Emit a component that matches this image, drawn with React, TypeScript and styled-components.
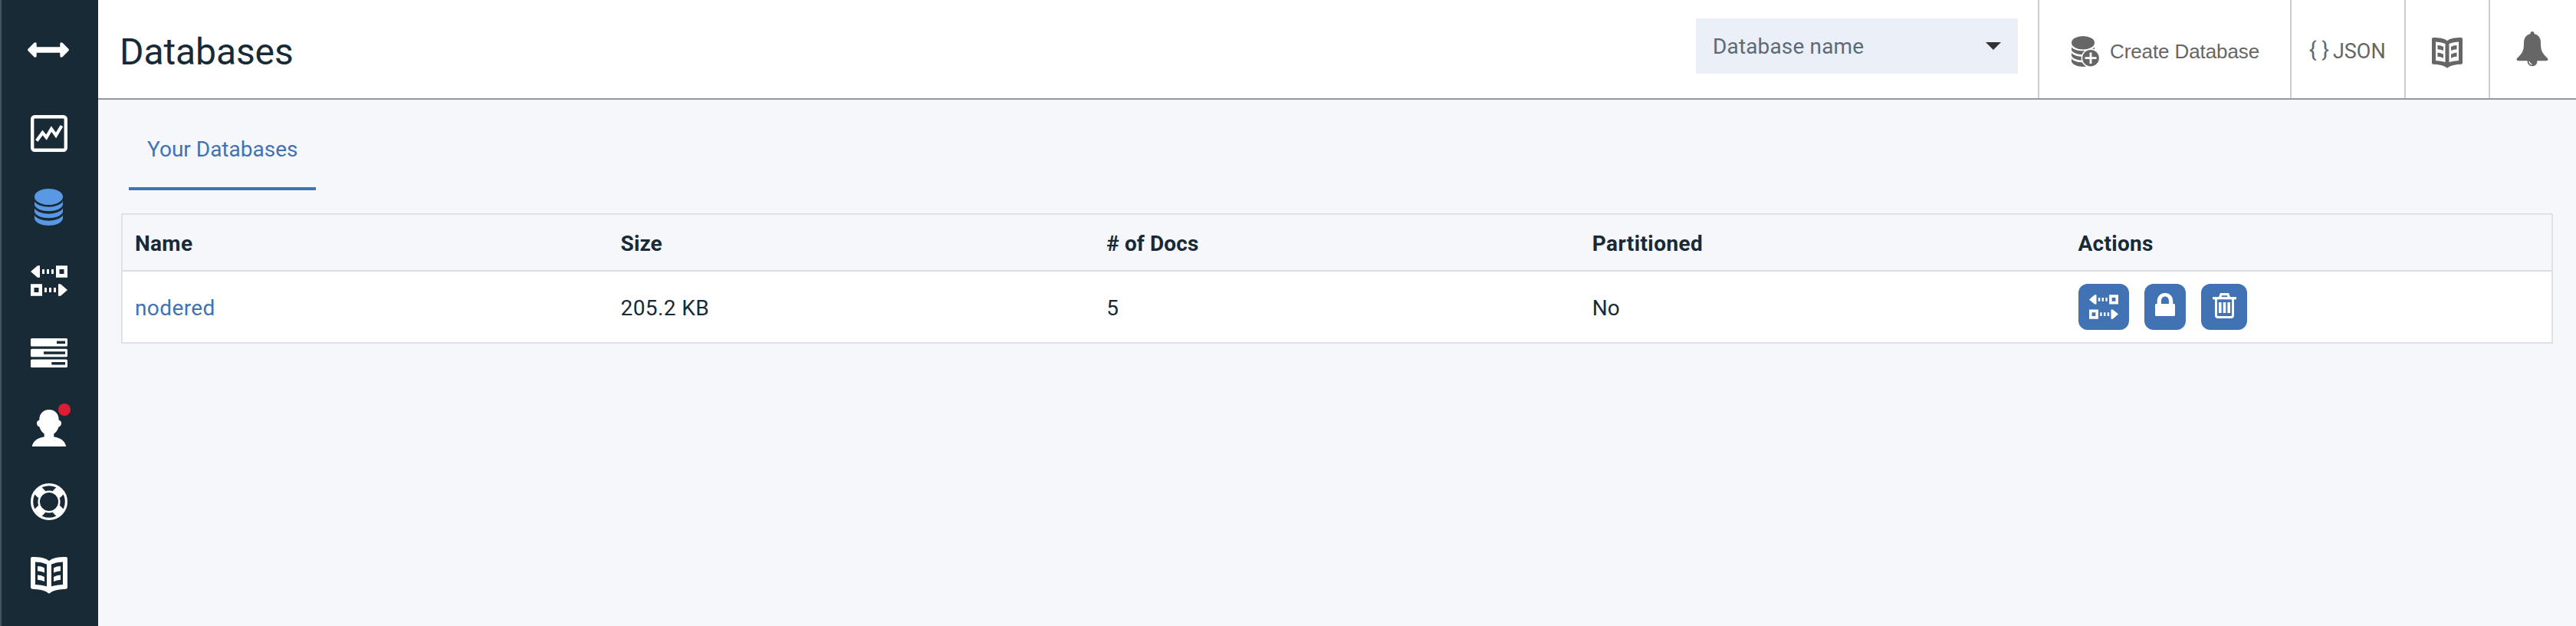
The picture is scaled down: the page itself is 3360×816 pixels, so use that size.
import React from 'react';
import styled, { createGlobalStyle } from 'styled-components';

const GlobalStyle = createGlobalStyle`
  * { box-sizing: border-box; }
  body { margin: 0; background: #f5f7fb; color: #182a35; font-family: Roboto, "Liberation Sans", sans-serif; font-size: 28px; }
  svg { display: block; flex: none; }
`;

const Page = styled.div`display: flex; height: 816px; overflow: hidden;`;

const Sidebar = styled.nav`
  display: flex; flex-direction: column; align-items: center;
  width: 128px; flex: none;
  background: #182a35; border-left: 2px solid #46545d; padding: 18px 2px 0 0;
`;

const NavItem = styled.a<{ $color?: string; $h: number; $nudge?: number }>`
  display: flex; align-items: center; justify-content: center;
  width: 100%; height: ${p => p.$h}px; flex: none; color: ${p => p.$color ?? '#fff'};
  padding-right: ${p => p.$nudge ?? 0}px;
`;

const Main = styled.main`flex: 1; min-width: 0;`;

const Header = styled.header`
  display: flex; height: 130px; background: #fff; border-bottom: 2px solid #959898;
`;

const Title = styled.h1`
  flex: 1; margin: 0; padding-left: 28px;
  font-size: 48px; font-weight: 400; line-height: 135px;
`;

const Label = styled.span<{ $ls?: number }>`letter-spacing: ${p => p.$ls ?? 0}px; white-space: nowrap;`;

const Select = styled.div`
  display: flex; align-items: center; justify-content: space-between;
  width: 420px; height: 72px; margin: 24px 26px 0 0; padding: 0 22px;
  background: #ebeff8; color: #5c6b75;
`;

const Caret = styled.i`
  border: 10px solid transparent; border-top-color: #333; border-bottom: 0;
`;

const Tool = styled.a<{ $w: number; $pad?: number; $top?: number }>`
  display: flex; align-items: center; width: ${p => p.$w}px; height: 128px;
  border-left: 2px solid #ccc; padding: ${p => p.$top ?? 0}px 0 0 ${p => p.$pad ?? 0}px; color: #666;
`;

const CreateText = styled(Label)`
  font-family: "Liberation Sans", sans-serif; font-size: 26px; margin-left: 14px; padding-top: 1px;
`;

const Braces = styled(Label)`font-size: 28px;`;
const JsonText = styled(Label)`font-size: 27px; padding-top: 5px; margin-left: 5px;`;

const Tabs = styled.div`display: flex; padding-left: 40px; height: 118px;`;
const Tab = styled.a`
  width: 244px; border-bottom: 4px solid #4172b4; color: #4172b4; padding-left: 24px; line-height: 129px;
`;

const Table = styled.section`
  margin: 30px 30px 0; border: 2px solid #dfe1e6; height: 170px;
`;

const Row = styled.div<{ $head?: boolean }>`
  display: grid; grid-template-columns: repeat(5, 1fr); align-items: center;
  height: ${p => (p.$head ? 74 : 92)}px;
  background: ${p => (p.$head ? 'transparent' : '#fff')};
  font-weight: ${p => (p.$head ? 700 : 400)};
  border-bottom: ${p => (p.$head ? '2px solid #dcdddf' : '0')};
`;

const Cell = styled.div<{ $link?: boolean }>`
  padding: 3px 0 0 16px; color: ${p => (p.$link ? '#4172b4' : 'inherit')};
`;

const Actions = styled.div`display: flex; gap: 20px; padding-left: 17px;`;

const ActionButton = styled.button<{ $w: number; $top?: number }>`
  display: flex; align-items: flex-start; justify-content: center;
  width: ${p => p.$w}px; height: 60px; padding: ${p => p.$top ?? 12}px 0 0; border: 0; border-radius: 12px;
  background: #4172b4; color: #fff;
`;

const ArrowsIcon = () => (
  <svg width="54" height="20" viewBox="0 0 54 20" fill="currentColor">
    <path d="M.600 8.800 L8.500 .8 Q11.700 -.8 11.700 2.500 V6.200 H42.300 V2.500 Q42.300 -.8 45.500 .8 L53.400 8.800 Q54.400 10 53.400 11.200 L45.500 19.200 Q42.300 20.800 42.300 17.500 V13.800 H11.700 V17.500 Q11.700 20.800 8.500 19.200 L.600 11.200 Q-.4 10 .6 8.800 Z" />
  </svg>
);

const ChartIcon = () => (
  <svg width="48" height="48" viewBox="0 0 48 48" fill="none" stroke="currentColor">
    <rect x="2.200" y="2.200" width="43.600" height="43.600" rx="3" strokeWidth="4.400" />
    <path d="M7.800 33.500 L15.500 23 L20.500 29 L27 18 L33 26.500 L40.500 14" strokeWidth="4.200" />
  </svg>
);

const DatabaseIcon = () => (
  <svg width="37" height="48" viewBox="0 0 36 48" preserveAspectRatio="none" fill="currentColor">
    <ellipse cx="18" cy="10.500" rx="18" ry="10.500" />
    <path d="M0 16.500 C5 26 31 26 36 16.500 V21 C33 32 3 32 0 21 Z" />
    <path d="M0 25.500 C5 35 31 35 36 25.500 V30 C33 41 3 41 0 30 Z" />
    <path d="M0 34.500 C5 44 31 44 36 34.500 V39 C33 51 3 51 0 39 Z" />
  </svg>
);

const ReplicateIcon = ({ w = 48, h = 40 }: { w?: number; h?: number }) => (
  <svg width={w} height={h} viewBox="0 0 48 40" preserveAspectRatio="none" fill="currentColor">
    <path d="M0 8 L9 .3 H12 V15.700 H9 Z M15 5h3v6h-3z M21 5h3v6h-3z M27 5h3v6h-3z" />
    <path fillRule="evenodd" d="M33 .3h15v15.400H33z M37.500 5v6h6V5z M0 24.300h15v15.400H0z M4.500 29v6h6v-6z" />
    <path d="M18 29h3v6h-3z M24 29h3v6h-3z M30 29h3v6h-3z M36 24.300h3L48 32l-9 7.700h-3z" />
  </svg>
);

const ServerIcon = () => (
  <svg width="48" height="38" viewBox="0 0 48 38" fill="currentColor" fillRule="evenodd">
    <path d="M1.500 0h45q1.500 0 1.500 1.500v7.500q0 1.500-1.500 1.500h-45Q0 10.500 0 9V1.500Q0 0 1.500 0z M34 3.500v3.500h11V3.500z" />
    <path d="M1.500 13.700h45q1.500 0 1.500 1.500v7.500q0 1.500-1.500 1.500h-45Q0 24.200 0 22.700v-7.500q0-1.500 1.500-1.500z M17 17.200v3.500h28v-3.500z" />
    <path d="M1.500 27.400h45q1.500 0 1.500 1.500v7.500q0 1.500-1.500 1.500h-45Q0 37.900 0 36.400v-7.500q0-1.500 1.500-1.500z M27.300 31v3.500H45V31z" />
  </svg>
);

const UserWrap = styled.span`position: relative; display: block; width: 48px; height: 48px;`;
const Dot = styled.i`
  position: absolute; left: 36px; top: -8px; width: 16px; height: 16px; border-radius: 50%; background: #dc1e35;
`;

const UserIcon = () => (
  <svg width="48" height="48" viewBox="0 0 48 48" fill="currentColor">
    <path d="M11.300 13.500 C11.300 4.500 17 0 24 0 S36.700 4.500 36.700 13.500 Q40 14.500 40 17.500 Q40 21.500 36.500 22.500 Q35 28 30.300 31.500 V35.500 C39 36.500 45 41 46.200 48 H1.800 C3 41 9 36.500 17.700 35.500 V31.500 Q13 28 11.500 22.500 Q8 21.500 8 17.500 Q8 14.500 11.300 13.500 Z" />
  </svg>
);

const LifeRingIcon = () => (
  <svg width="48" height="48" viewBox="0 0 48 48" fill="none" stroke="currentColor">
    <circle cx="24" cy="24" r="22.400" strokeWidth="3.200" />
    <circle cx="24" cy="24" r="13.300" strokeWidth="2.600" />
    <path d="M14.700 14.700 L9.200 9.200 M33.300 14.700 L38.800 9.200 M14.700 33.300 L9.200 38.800 M33.300 33.300 L38.800 38.800" strokeWidth="13" />
  </svg>
);

const BookIcon = ({ size = 48 }: { size?: number }) => (
  <svg width={size} height={size} viewBox="0 0 48 48" fill="currentColor">
    <path fillRule="evenodd" d="M2 0 C12 0 19 1 24 5 C29 1 36 0 46 0 Q48 0 48 2 V39.500 Q48 41.500 46 41.700 C38 42 31 43 26.500 46 Q24 49 21.500 46 C17 43 10 42 2 41.700 Q0 41.500 0 39.500 V2 Q0 0 2 0 Z M6 6.500 V36 Q15 36.500 21 38.500 V9.500 Q14 6.500 6 6.500 Z M42 6.500 Q34 6.500 27 9.500 V38.500 Q33 36.500 42 36 Z" />
    <path d="M9 12 Q14 12 18 14.300 V20.500 Q14 18.500 9 18.200 Z M9 23.500 Q14 23.800 18 26 V32 Q14 30 9 29.800 Z M39 12 Q34 12 30 14.300 V20.500 Q34 18.500 39 18.200 Z M39 23.500 Q34 23.800 30 26 V32 Q34 30 39 29.800 Z" />
  </svg>
);

const CreateDbIcon = () => (
  <svg width="36" height="40" viewBox="0 0 36 40" fill="currentColor">
    <ellipse cx="15" cy="8.800" rx="15" ry="8.800" />
    <path d="M0 14.200 C4 21 26 21 30 14.200 V17.600 C26 26 3 26 0 18.200 Z" />
    <path d="M0 21.700 C4 28.500 26 28.500 30 21.700 V25.100 C26 33.500 3 33.500 0 25.700 Z" />
    <path d="M0 29.200 C4 36 26 36 30 29.200 V34 C26 42 3 42 0 33.200 Z" />
    <circle cx="25" cy="28.700" r="11.600" fill="currentColor" stroke="#fff" strokeWidth="1.600" />
    <path d="M25 21.500V36 M17.500 28.700H32.500" stroke="#fff" strokeWidth="2.800" />
  </svg>
);

const BellIcon = () => (
  <svg width="42" height="46" viewBox="0 0 42 46" fill="currentColor">
    <path d="M18.500 3 Q18.500 0 21 0 T23.500 3 Q32 5 32 15 C32 25 33.500 28 40.500 34.500 Q43 38 39 38.300 H3 Q-1 38 1.500 34.500 C8.500 28 10 25 10 15 Q10 5 18.500 3 Z" />
    <path d="M14.500 38 H27.500 Q27.500 45 21 45.300 Q14.500 45 14.500 38 Z" />
    <path d="M17 39 Q17.500 42.500 20.500 43.200" fill="none" stroke="#fff" strokeWidth="1.200" />
  </svg>
);

const LockIcon = () => (
  <svg width="26" height="30" viewBox="0 0 26 30" fill="currentColor">
    <path fillRule="evenodd" d="M2.700 14 V11 C2.700 -3.700 23.300 -3.700 23.300 11 V14 H24.500 Q26 14 26 15.500 V28.500 Q26 30 24.500 30 H1.500 Q0 30 0 28.500 V15.500 Q0 14 1.500 14 Z M8 14 H18 V10.500 C18 2.500 8 2.500 8 10.500 Z" />
  </svg>
);

const TrashIcon = () => (
  <svg width="31" height="33" viewBox="0 0 31 33" fill="none" stroke="currentColor">
    <path d="M0 6.700 H31" strokeWidth="3.200" />
    <path d="M9.500 6 L11 1.700 H20 L21.500 6" strokeWidth="3.200" />
    <path d="M4.500 7 V29 Q4.500 31.500 7 31.500 H24 Q26.500 31.500 26.500 29 V7" strokeWidth="3" />
    <path d="M9.800 12V26 M15.500 12V26 M21.200 12V26" strokeWidth="3.600" />
  </svg>
);

const columns = [
  { name: 'Name', ls: 0.3 },
  { name: 'Size', ls: 0.1 },
  { name: '# of Docs', ls: 0.1 },
  { name: 'Partitioned', ls: 0.4 },
  { name: 'Actions', ls: 0.3 },
];

export default function App() {
  return (
    <Page>
      <GlobalStyle />
      <Sidebar>
        <NavItem $h={94} $nudge={2}><ArrowsIcon /></NavItem>
        <NavItem $h={124}><ChartIcon /></NavItem>
        <NavItem $h={68} $nudge={1} $color="#5999e4"><DatabaseIcon /></NavItem>
        <NavItem $h={124}><ReplicateIcon /></NavItem>
        <NavItem $h={64}><ServerIcon /></NavItem>
        <NavItem $h={132}><UserWrap><UserIcon /><Dot /></UserWrap></NavItem>
        <NavItem $h={60}><LifeRingIcon /></NavItem>
        <NavItem $h={132}><BookIcon /></NavItem>
      </Sidebar>
      <Main>
        <Header>
          <Title><Label $ls={-0.1}>Databases</Label></Title>
          <Select><Label $ls={0.15}>Database name</Label><Caret /></Select>
          <Tool $w={329} $pad={42} $top={5}><CreateDbIcon /><CreateText $ls={-0.1}>Create Database</CreateText></Tool>
          <Tool $w={149} $pad={23}><Braces>{'{ }'}</Braces><JsonText>JSON</JsonText></Tool>
          <Tool $w={110} $pad={34} $top={9}><BookIcon size={40} /></Tool>
          <Tool $w={114} $pad={34}><BellIcon /></Tool>
        </Header>
        <Tabs><Tab><Label>Your Databases</Label></Tab></Tabs>
        <Table>
          <Row $head>
            {columns.map(c => <Cell key={c.name}><Label $ls={c.ls}>{c.name}</Label></Cell>)}
          </Row>
          <Row>
            <Cell $link><Label $ls={0.4}>nodered</Label></Cell>
            <Cell><Label $ls={0.4}>205.2 KB</Label></Cell>
            <Cell><Label>5</Label></Cell>
            <Cell><Label>No</Label></Cell>
            <Actions>
              <ActionButton $w={66} $top={14}><ReplicateIcon w={38} h={32} /></ActionButton>
              <ActionButton $w={54}><LockIcon /></ActionButton>
              <ActionButton $w={60}><TrashIcon /></ActionButton>
            </Actions>
          </Row>
        </Table>
      </Main>
    </Page>
  );
}
